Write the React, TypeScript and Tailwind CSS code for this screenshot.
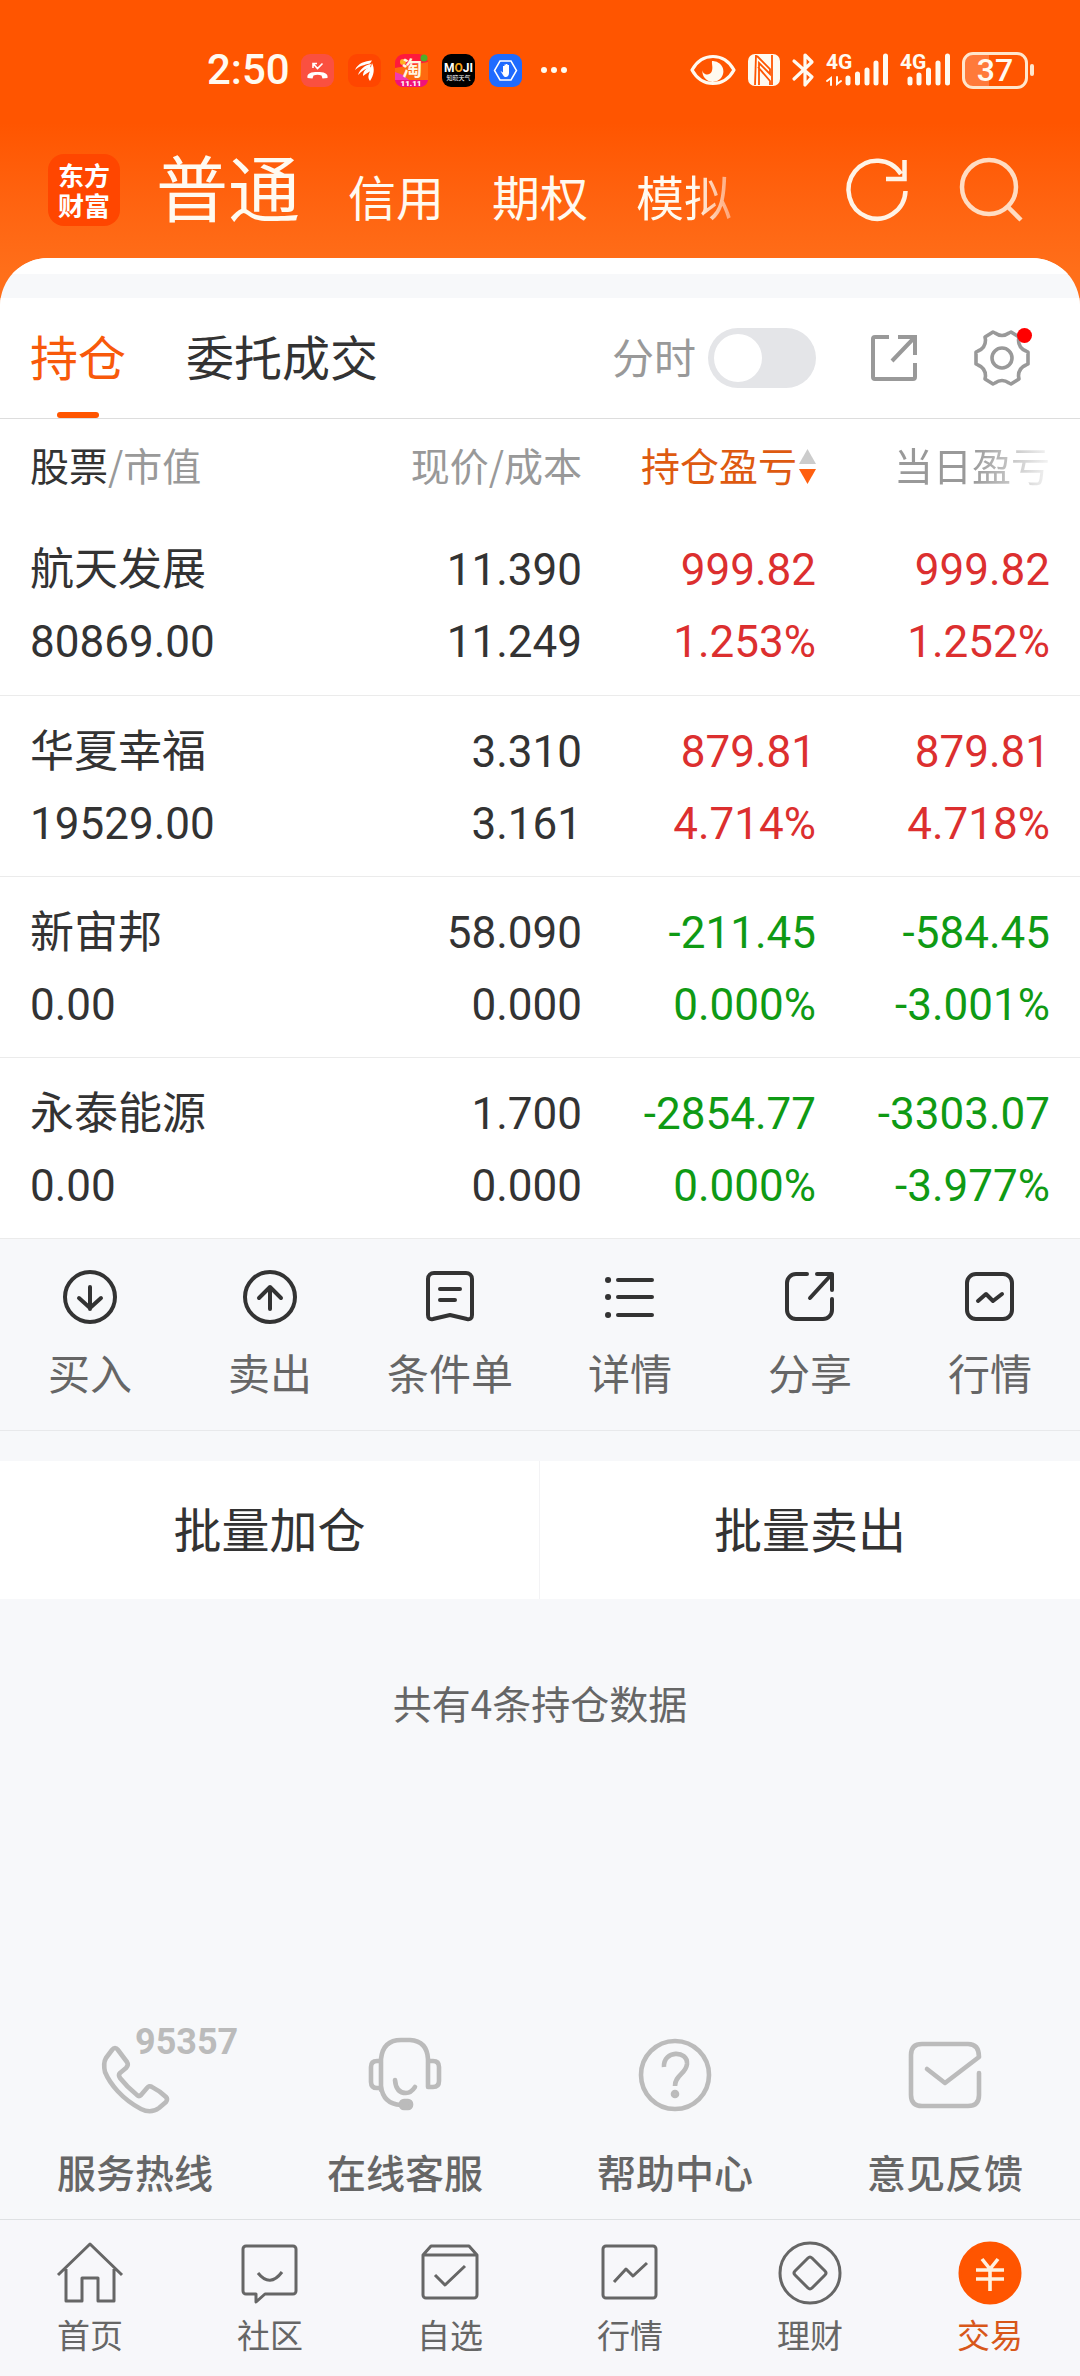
import type { ReactNode } from "react";

const ICON = "block shrink-0 overflow-visible";

function StatusBar() {
  return (
    <div className="flex items-center justify-between pt-10 pl-[207px] pr-[46px] h-[100px] text-[#fffaf0]">
      <div className="flex items-center gap-3.5">
        <span className="w-20 text-[42px] leading-[60px] font-medium font-['Roboto',sans-serif]">2:50</span>
        <svg className={ICON} width="33" height="33" viewBox="0 0 33 33" fill="none">
          <rect width="33" height="33" rx="9" fill="#fa5040" />
          <path d="M12 14V9.500h4M12.500 10l4 4.500 5-5" stroke="#fff" strokeWidth="1.600" />
          <path d="M6.500 24c-1-5 4-6 10-6s11 1 10 6l-5 .5-1-3c-3-1-5-1-8 0l-1 3z" fill="#fff" />
        </svg>
        <svg className={ICON} width="33" height="33" viewBox="0 0 33 33">
          <rect width="33" height="33" rx="9" fill="#ff4600" />
          <path d="M7 16C10 9 17 7 24 6.500L22 9.500C16 11 11 12 7 16z" fill="#fff" />
          <path d="M10 21c2-6 7-10 13-11l-1 4c-6 1-9 4-12 7z" fill="#fff" />
          <path d="M15 22c0-5 3-8 8-9l0 4c-3 1-5 3-8 5z" fill="#fff" />
          <path d="M24 9c3 6 2 12-2 18-3-4-1-7 0-10 1-3 1-5 2-8z" fill="#fff" />
        </svg>
        <svg className={ICON} width="33" height="33" viewBox="0 0 33 33">
          <rect width="33" height="33" rx="9" fill="#ff1a3c" />
          <path d="M0 14l33-6v18H0z" fill="#ff6a10" />
          <path d="M0 18l8 3 6 5H0z" fill="#f23ab0" />
          <circle cx="29" cy="4" r="3.500" fill="#4fae2a" />
          <circle cx="8" cy="8" r="3" fill="#ffb020" />
          <path d="M0 26h33a8 8 0 0 1-8 7H8a8 8 0 0 1-8-7z" fill="#f0127a" />
          <text x="17" y="22" textAnchor="middle" fontSize="20" fontWeight="700" fill="#fff6e0">淘</text>
          <text x="16" y="32" textAnchor="middle" fontSize="8" fontWeight="900" fill="#fff" fontFamily="Roboto, sans-serif">11.11</text>
        </svg>
        <svg className={ICON} width="33" height="33" viewBox="0 0 33 33">
          <rect width="33" height="33" rx="9" fill="#000" />
          <text x="16.500" y="18" textAnchor="middle" fontSize="12" fontWeight="700" fill="#fff" fontFamily="Roboto, sans-serif">M<tspan fill="#f5a31a">O</tspan>JI</text>
          <text x="16.500" y="26" textAnchor="middle" fontSize="6" fill="#fff">知晓天气</text>
        </svg>
        <svg className={ICON} width="33" height="33" viewBox="0 0 33 33" fill="none">
          <rect width="33" height="33" rx="9" fill="#1f6bff" />
          <path d="M11 7h11l5.500 9.500L22 26H11L5.500 16.500z" stroke="#fff" strokeWidth="1.500" />
          <path d="M11.500 17l2.500 1.500V12h1.500v-1.500H17V10h1.500v1H20v8c0 5-5 5-6 2z" fill="#fff" />
        </svg>
        <svg className="block shrink-0 ml-1" width="28" height="8" viewBox="0 0 28 8" fill="currentColor">
          <circle cx="4" cy="4" r="3" /><circle cx="14" cy="4" r="3" /><circle cx="24" cy="4" r="3" />
        </svg>
      </div>
      <div className="flex items-center gap-3">
        <svg className={ICON} width="46" height="32" viewBox="0 0 46 32" fill="none">
          <path d="M2 16C12-2 34-2 44 16 34 34 12 34 2 16z" stroke="currentColor" strokeWidth="3.200" strokeLinejoin="round" />
          <path d="M22 7a10.500 10.500 0 1 1-9.500 9c0 5 7 6 9 2s0-8 .5-11z" fill="currentColor" />
        </svg>
        <svg className={ICON} width="32" height="32" viewBox="0 0 32 32" fill="none">
          <rect width="32" height="32" rx="7" fill="currentColor" />
          <path d="M8 1l-1 30M9 2l13 13v5L11 9v22M10 13l12 14v4M24 31V1" stroke="#ff5500" strokeWidth="1.800" />
        </svg>
        <svg className={ICON} width="22" height="34" viewBox="0 0 22 34" fill="none" stroke="currentColor" strokeWidth="3.200" strokeLinejoin="round" strokeLinecap="round">
          <path d="M2 8l18 16-7 8V2l7 7L2 26" />
        </svg>
        <svg className={ICON} width="62" height="36" viewBox="0 0 62 36" fill="none" stroke="currentColor" strokeLinecap="round">
          <text x="0" y="17" fontSize="21" fontWeight="700" stroke="none" fill="currentColor" fontFamily="Roboto, sans-serif">4G</text>
          <path d="M5 33v-7l-4 3M11 25v7l4-3" strokeWidth="2" />
          <path d="M22 26v5M31.500 22v9M41 18v13M50 11v20M59.500 4v27" strokeWidth="5" />
        </svg>
        <svg className={ICON} width="50" height="36" viewBox="0 0 50 36" fill="none" stroke="currentColor" strokeLinecap="round">
          <text x="0" y="17" fontSize="21" fontWeight="700" stroke="none" fill="currentColor" fontFamily="Roboto, sans-serif">4G</text>
          <path d="M10 27v4M19 23v8M28.500 18v13M38 11v20M47.500 4v27" strokeWidth="5" />
        </svg>
        <div className="flex items-center gap-0.5">
          <div className="flex items-center justify-center w-[66px] h-[37px] border-[3px] border-[#ffe6cc] rounded-[11px] bg-linear-to-r from-[#ff7a3a] from-40% to-[#ff5500] to-40% text-[32px] leading-8 font-medium font-['Roboto',sans-serif]">37</div>
          <div className="w-1 h-3 rounded-full bg-[#ffe6cc]" />
        </div>
      </div>
    </div>
  );
}

function Header() {
  return (
    <header className="bg-linear-to-b from-[#ff5500] from-40% to-[#ff6f1a] to-90% pb-12">
      <StatusBar />
      <div className="flex items-center h-[158px] pt-[22px] pl-12 pr-14">
        <h1 className="flex flex-col items-center justify-center w-[72px] h-[72px] rounded-2xl bg-[#ff4600] text-white text-[26px] leading-[30px] font-bold">
          <span>东方</span><span>财富</span>
        </h1>
        <nav className="flex flex-1 items-baseline gap-12 ml-9 text-[#fffaf0] text-[48px] leading-[96px]" aria-label="账户">
          <a href="#normal" className="text-[72px]">普通</a>
          <a href="#credit">信用</a>
          <a href="#option">期权</a>
          <a href="#sim" className="bg-linear-to-r from-[#fffaf0] from-60% to-[#ffa070] to-100% bg-clip-text text-transparent">模拟</a>
        </nav>
        <div className="flex items-center gap-11 text-[#fff3e6]">
          <button aria-label="刷新">
            <svg className={ICON} width="68" height="68" viewBox="0 0 68 68" fill="none" stroke="currentColor" strokeWidth="4.500">
              <path d="M61.500 35A28.500 29 0 1 1 57 18M60.500 4v19H42" />
            </svg>
          </button>
          <button aria-label="搜索" className="text-[#ffdcc2]">
            <svg className={ICON} width="68" height="68" viewBox="0 0 68 68" fill="none" stroke="currentColor" strokeWidth="4.500">
              <circle cx="33" cy="31" r="27" /><path d="M51 50l14 14" />
            </svg>
          </button>
        </div>
      </div>
    </header>
  );
}

function PanelTabs() {
  return (
    <div className="flex items-stretch h-[121px] pl-[30px] pr-12 bg-white border-b border-[#dddddd] text-[48px]">
      <button className="relative pb-1.5 text-[#f8590a]">
        持仓
        <span className="absolute bottom-0 left-1/2 -translate-x-1/2 w-[42px] h-1.5 rounded-full bg-[#ff5500]" />
      </button>
      <button className="ml-[60px] pb-1.5 text-[#333333]">委托成交</button>
      <label className="flex items-center gap-3 ml-auto text-[42px] text-[#999999]">
        <span className="pb-1.5">分时</span>
        <input type="checkbox" role="switch" className="appearance-none w-[108px] h-[60px] p-1.5 rounded-full bg-[#e4e5e8] before:block before:size-12 before:rounded-full before:bg-white" />
      </label>
      <button className="ml-[52px]" aria-label="导出">
        <svg className={ICON} width="52" height="52" viewBox="0 0 52 52" fill="none" stroke="#999999" strokeWidth="4">
          <path d="M21 5H7a2 2 0 0 0-2 2v38a2 2 0 0 0 2 2h38a2 2 0 0 0 2-2V31M30 5h17v18M46 6L24 29" />
        </svg>
      </button>
      <button className="relative ml-[52px]" aria-label="设置">
        <svg className={ICON} width="60" height="60" viewBox="0 0 60 60" fill="none" stroke="#999999" strokeWidth="3.600" strokeLinejoin="round">
          <path d="M21 4l2 1q7 5 14 0l2-1 8 5-.5 3q0 8 7.500 11l2 1v12l-2 1q-7.500 3-7.500 11l.5 3-8 5-2-1q-7-5-14 0l-2 1-8-5 .5-3q0-8-7.500-11l-2-1V24l2-1q7.500-3 7.500-11L13 9z" />
          <circle cx="30" cy="30" r="10" />
        </svg>
        <span className="absolute right-0 top-[30px] size-[15px] rounded-full bg-[#ff0000]" />
      </button>
    </div>
  );
}

type Tone = "text-[#dc2f2f]" | "text-[#0f9a14]";
const RED: Tone = "text-[#dc2f2f]";
const GREEN: Tone = "text-[#0f9a14]";

const holdings: { name: string; value: string; price: string; cost: string; total: [string, string]; day: [string, string]; tone: Tone }[] = [
  { name: "航天发展", value: "80869.00", price: "11.390", cost: "11.249", total: ["999.82", "1.253%"], day: ["999.82", "1.252%"], tone: RED },
  { name: "华夏幸福", value: "19529.00", price: "3.310", cost: "3.161", total: ["879.81", "4.714%"], day: ["879.81", "4.718%"], tone: RED },
  { name: "新宙邦", value: "0.00", price: "58.090", cost: "0.000", total: ["-211.45", "0.000%"], day: ["-584.45", "-3.001%"], tone: GREEN },
  { name: "永泰能源", value: "0.00", price: "1.700", cost: "0.000", total: ["-2854.77", "0.000%"], day: ["-3303.07", "-3.977%"], tone: GREEN },
];

function Pair({ a, b }: { a: string; b: string }) {
  return (
    <>
      <div>{a}</div>
      <div>{b}</div>
    </>
  );
}

function Holdings() {
  return (
    <table className="w-full table-fixed border-collapse bg-white text-[#333333]">
      <colgroup>
        <col />
        <col className="w-[234px]" />
        <col className="w-[234px]" />
        <col className="w-[264px]" />
      </colgroup>
      <thead>
        <tr className="h-[95px] text-[39px] text-[#999999]">
          <th className="pb-1 pl-[30px] text-left font-normal"><span className="text-[#333333]">股票</span>/市值</th>
          <th className="pb-1 text-right font-normal">现价/成本</th>
          <th className="font-normal" aria-sort="descending">
            <button className="flex w-full items-center justify-end gap-0.5 text-[#de5a10]">
              <span className="pb-1">持仓盈亏</span>
              <svg className={ICON} width="17" height="36" viewBox="0 0 17 36">
                <path d="M8.500 0L17 15H0z" fill="#cccccc" /><path d="M0 20h17L8.500 35z" fill="#ff5f0f" />
              </svg>
            </button>
          </th>
          <th className="pb-1 pr-[30px] text-right font-normal">
            <span className="bg-linear-to-r from-[#999999] from-50% to-[#f5f5f5] to-100% bg-clip-text text-transparent">当日盈亏</span>
          </th>
        </tr>
      </thead>
      <tbody className="font-['Roboto','Noto_Sans_CJK_SC',sans-serif] text-[44px] leading-[72px]">
        {holdings.map((h) => (
          <tr key={h.name} className="h-[181px] border-b border-[#ebebeb]">
            <td className="pt-1 pl-[30px]"><Pair a={h.name} b={h.value} /></td>
            <td className="pt-1 text-right"><Pair a={h.price} b={h.cost} /></td>
            <td className={`pt-1 text-right ${h.tone}`}><Pair a={h.total[0]} b={h.total[1]} /></td>
            <td className={`pt-1 pr-[30px] text-right ${h.tone}`}><Pair a={h.day[0]} b={h.day[1]} /></td>
          </tr>
        ))}
      </tbody>
    </table>
  );
}

const actions: { label: string; icon: ReactNode }[] = [
  { label: "买入", icon: <><circle cx="30" cy="30" r="25" /><path d="M30 20v22M19 31l11 10 11-10" /></> },
  { label: "卖出", icon: <><circle cx="30" cy="30" r="25" /><path d="M30 42V20M19 31l11-11 11 11" /></> },
  { label: "条件单", icon: <path d="M14 6h32a6 6 0 0 1 6 6v36q0 5-5 4l-17-4-17 4q-5 1-5-4V12a6 6 0 0 1 6-6zM20 22h20M20 33h15" /> },
  { label: "详情", icon: <><path d="M18 13h34M18 30h34M18 48h34" /><path d="M8 13h.1M8 30h.1M8 48h.1" strokeWidth="6" /></> },
  { label: "分享", icon: <path d="M27 7H16A9 9 0 0 0 7 16v27a9 9 0 0 0 9 9h27a9 9 0 0 0 9-9V32M37 7h15v16M51 8L30 31" /> },
  { label: "行情", icon: <><rect x="7" y="7" width="45" height="45" rx="9" /><path d="M18 34l8-7 7 7 9-7" /></> },
];

function ActionBar() {
  return (
    <div className="grid grid-cols-6 h-48 border-b border-[#e8e9eb] text-[42px] text-[#666666]">
      {actions.map((a) => (
        <button key={a.label} className="flex flex-col items-center pt-7">
          <svg className={ICON} width="60" height="60" viewBox="0 0 60 60" fill="none" stroke="#333333" strokeWidth="4" strokeLinecap="round" strokeLinejoin="round">
            {a.icon}
          </svg>
          <span className="mt-3.5 leading-[62px]">{a.label}</span>
        </button>
      ))}
    </div>
  );
}

const services: { label: string; icon: ReactNode }[] = [
  {
    label: "服务热线",
    icon: <path d="M16 14Q19 10 22 14L31 26Q33 29 30 32L24 37Q22 39 24 42Q31 51 41 59Q43 61 45 59L51 52Q53 49 56 51Q64 55 70 61Q72 63 70 66L63 72Q55 78 45 73C26 63 14 48 9 36Q7 27 10 22z" />,
  },
  {
    label: "在线客服",
    icon: (
      <>
        <path d="M15 52H11Q5 52 5 46V31Q5 25 11 25H15M15 54V23Q17 4 35 4H44Q61 5 62 23V51H67Q73 51 73 45V31Q73 25 67 25H62M15 50Q17 68 35 69" />
        <path d="M29 44Q30 57 40 57Q45 57 49 51" />
        <rect x="35" y="65" width="10" height="7" rx="3" fill="#bbbbbb" />
      </>
    ),
  },
  {
    label: "帮助中心",
    icon: (
      <>
        <circle cx="39" cy="39" r="34" />
        <path d="M28 31C27 14 52 14 51 28C50 38 39 39 39 50" strokeLinecap="butt" /><circle cx="39" cy="58" r="2" />
      </>
    ),
  },
  {
    label: "意见反馈",
    icon: <path d="M73 37V59Q73 70 62 70H16Q5 70 5 59V19Q5 8 16 8H62Q73 8 73 21L39 47L21 33" />,
  },
];

function Services() {
  return (
    <div className="grid grid-cols-4 text-[39px] font-medium text-[#666666]">
      {services.map((s, i) => (
        <a key={s.label} href={`#service-${i}`} className="relative flex flex-col items-center">
          <svg className={ICON} width="78" height="78" viewBox="0 0 78 78" fill="none" stroke="#bbbbbb" strokeWidth="4.600" strokeLinecap="round" strokeLinejoin="round">
            {s.icon}
          </svg>
          {i === 0 && (
            <span className="absolute left-1/2 -top-3 text-[36px] leading-9 font-bold text-[#bbbbbb] font-['Roboto',sans-serif]">95357</span>
          )}
          <span className="mt-7 leading-[58px]">{s.label}</span>
        </a>
      ))}
    </div>
  );
}

const navItems: { label: string; icon: ReactNode }[] = [
  { label: "首页", icon: <path d="M2 38L34 7L66 38M10 32V64H26V41H42V64H58V32" /> },
  { label: "社区", icon: <path d="M10 9H57a3 3 0 0 1 3 3V54a3 3 0 0 1-3 3H29L20 65V57H10a3 3 0 0 1-3-3V12a3 3 0 0 1 3-3zM22 36Q34 51 46 35" /> },
  { label: "自选", icon: <path d="M15 9H53L61 18V58a3 3 0 0 1-3 3H10a3 3 0 0 1-3-3V18zM7 18H61M19 38L29 48L49 29" /> },
  { label: "行情", icon: <path d="M10 9H57a3 3 0 0 1 3 3V58a3 3 0 0 1-3 3H10a3 3 0 0 1-3-3V12a3 3 0 0 1 3-3zM18 45L30 32L37 39L51 26" /> },
  { label: "理财", icon: <><circle cx="34" cy="36" r="30" /><path d="M32 21Q34 19 36 21L49 34Q51 36 49 38L36 51Q34 53 32 51L19 38Q17 36 19 34z" /></> },
  { label: "交易", icon: <><circle cx="34" cy="36" r="30" fill="#ff5500" stroke="#ff5500" /><path d="M26 22L34 32L42 22M20 33H48M20 42H48M34 32V54" stroke="#fff1e0" strokeWidth="3.600" /></> },
];

function BottomNav() {
  return (
    <nav className="grid grid-cols-6 h-[157px] border-t border-[#dfe1e3] bg-[#f7f7fa] text-[33px]" aria-label="主导航">
      {navItems.map((n, i) => (
        <a key={n.label} href={`#nav-${i}`} className={i === 5 ? "flex flex-col items-center pt-[17px] text-[#d8571a]" : "flex flex-col items-center pt-[17px] text-[#666666]"}>
          <svg className={ICON} width="68" height="72" viewBox="0 0 68 72" fill="none" stroke="#666666" strokeWidth="3" strokeLinejoin="round">
            {n.icon}
          </svg>
          <span className="mt-px leading-[48px]">{n.label}</span>
        </a>
      ))}
    </nav>
  );
}

export default function App() {
  return (
    <div className="flex flex-col min-h-screen bg-[#f7f8fa] font-['Noto_Sans_CJK_SC',sans-serif]">
      <Header />
      <main className="relative flex flex-col flex-1 -mt-12">
        <section className="overflow-hidden rounded-t-[48px] bg-[#f7f8fa]">
          <div className="h-4 bg-white" />
          <div className="h-6" />
          <PanelTabs />
          <Holdings />
        </section>
        <ActionBar />
        <div className="grid grid-cols-2 h-[138px] mt-[30px] bg-white text-[48px] text-[#333333]">
          <button className="pb-1.5 border-r border-[#f3f3f5]">批量加仓</button>
          <button className="pb-1.5">批量卖出</button>
        </div>
        <p className="mt-[74px] text-center text-[39px] leading-[58px] text-[#666666]">共有4条持仓数据</p>
        <div className="mt-auto mb-[19px]">
          <Services />
        </div>
      </main>
      <BottomNav />
    </div>
  );
}
